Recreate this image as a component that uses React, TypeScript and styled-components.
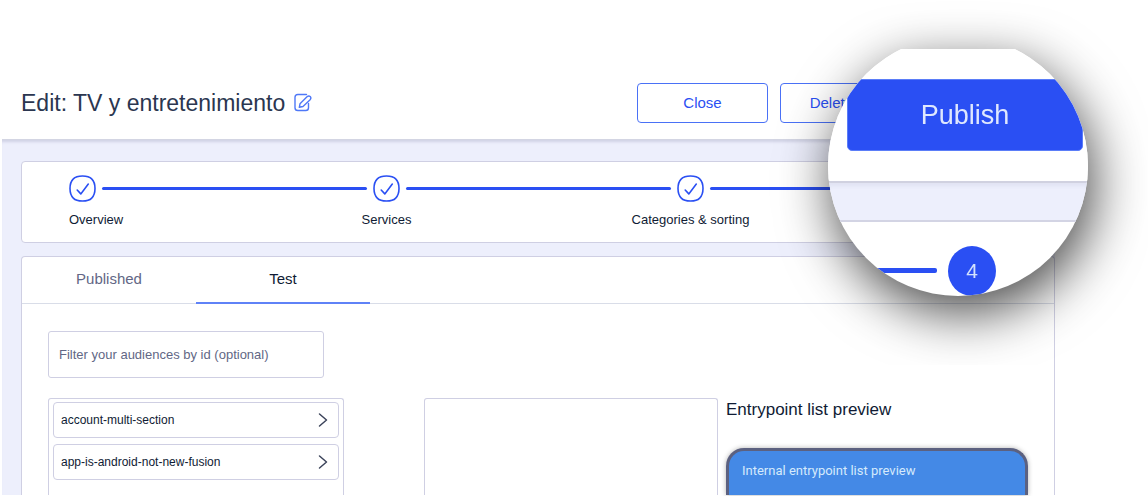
import React from "react";
import styled, { createGlobalStyle } from "styled-components";

const blue = "#2a4ff3";
const ink = "#0f1b34";
const muted = "#626785";
const line = "#cfcfe3";
const lavender = "#edeffc";

const GlobalStyle = createGlobalStyle`
  * { box-sizing: border-box; }
  body {
    margin: 0;
    background: #fff;
    color: ${ink};
    font-family: "Liberation Sans", Arial, sans-serif;
  }
  button, input { font-family: inherit; }
`;

const Page = styled.div`
  position: relative;
  height: 100vh;
  padding: 66px 93px 1px 2px;
  display: flex;
  flex-direction: column;
  overflow: hidden;
`;

const Header = styled.header`
  display: flex;
  align-items: center;
  height: 74px;
  flex: none;
  padding: 0 144px 0 19px;
  background: #fff;
  border-bottom: 1px solid #d3d5e3;
`;

const Title = styled.h1`
  margin: 0;
  font-size: 23px;
  line-height: 28px;
  font-weight: 400;
  color: #2b3650;
  white-space: nowrap;
`;

const IconButton = styled.button`
  display: flex;
  margin-left: 9px;
  padding: 0;
  border: 0;
  background: none;
  color: #4f78f7;
`;

const Actions = styled.div`
  display: flex;
  gap: 12px;
  margin-left: auto;
`;

const OutlineButton = styled.button`
  width: 131px;
  height: 40px;
  padding: 0;
  border: 1px solid #4a71f6;
  border-radius: 4px;
  background: #fff;
  color: ${blue};
  font-size: 15px;
  white-space: nowrap;
`;

const Body = styled.main`
  flex: 1;
  min-height: 0;
  display: flex;
  flex-direction: column;
  gap: 13px;
  padding: 21px 0 0 19px;
  background: ${lavender};
  box-shadow: inset 0 4px 3px -2px rgba(60, 64, 110, 0.16);
`;

const Steps = styled.ol`
  display: flex;
  flex: none;
  margin: 0;
  padding: 13px 73px 13px 47px;
  list-style: none;
  background: #fff;
  border: 1px solid ${line};
  border-radius: 4px;
`;

const Step = styled.li<{ $align: "start" | "center" }>`
  flex: 1;
  display: grid;
  grid-template-columns: 27px 1fr;
  align-items: center;
  row-gap: 9px;

  & > span {
    justify-self: ${(p) => p.$align};
    white-space: nowrap;
    font-size: 13px;
    line-height: 18px;
  }
`;

const StepLine = styled.div`
  height: 3px;
  margin: 0 6px;
  border-radius: 2px;
  background: ${blue};
`;

const Panel = styled.section`
  flex: 1;
  min-height: 0;
  display: flex;
  flex-direction: column;
  background: #fff;
  border: 1px solid ${line};
  border-bottom: 0;
  border-radius: 4px 4px 0 0;
`;

const Tabs = styled.div`
  display: flex;
  flex: none;
  height: 47px;
  border-bottom: 1px solid #d9dde8;
`;

const Tab = styled.button<{ $active?: boolean }>`
  width: 174px;
  height: 47px;
  padding: 0 0 2px;
  border: 0;
  border-bottom: 2px solid ${(p) => (p.$active ? "#5f82f7" : "transparent")};
  background: none;
  color: ${(p) => (p.$active ? ink : muted)};
  font-size: 15px;
`;

const Filter = styled.input`
  flex: none;
  width: 276px;
  height: 47px;
  margin: 27px 0 20px 26px;
  padding: 0 10px;
  border: 1px solid ${line};
  border-radius: 3px;
  color: ${ink};
  font-size: 13px;

  &::placeholder { color: ${muted}; opacity: 1; }
`;

const Columns = styled.div`
  flex: 1;
  min-height: 0;
  display: flex;
  gap: 8px;
  padding: 0 26px;
`;

const AudienceList = styled.ul`
  width: 296px;
  margin: 0 72px 0 0;
  padding: 3px 4px;
  display: flex;
  flex-direction: column;
  gap: 6px;
  list-style: none;
  border: 1px solid ${line};
  border-bottom: 0;
  border-radius: 3px 3px 0 0;
`;

const AudienceButton = styled.button`
  display: flex;
  align-items: center;
  justify-content: space-between;
  width: 100%;
  height: 36px;
  padding: 0 9px 0 7px;
  border: 1px solid ${line};
  border-radius: 4px;
  background: #fff;
  color: ${ink};
  font-size: 12px;
`;

const EmptyBox = styled.div`
  width: 294px;
  border: 1px solid ${line};
  border-bottom: 0;
  border-radius: 3px 3px 0 0;
`;

const PreviewColumn = styled.div`
  flex: 1;
  min-width: 0;
  display: flex;
  flex-direction: column;

  h2 {
    margin: 0 0 26px;
    font-size: 17px;
    line-height: 24px;
    font-weight: 400;
    white-space: nowrap;
  }
`;

const Device = styled.div`
  flex: 1;
  min-height: 0;
  border: 3px solid #5c6180;
  border-bottom: 0;
  border-radius: 18px 18px 0 0;
  background: #4489e6;
  box-shadow: 0 0 5px rgba(0, 0, 0, 0.3);
  padding: 10px 13px;
  color: #d5eafc;
  font: 13px/20px Roboto, sans-serif;
  white-space: nowrap;
`;

const LensArea = styled.div`
  position: absolute;
  top: 0;
  right: 0;
  z-index: 2;
  overflow: hidden;
  padding: 49px 60px 69px 90px;
  pointer-events: none;
`;

const LensShadow = styled.div`
  filter: drop-shadow(5px 17px 27px rgba(0, 0, 0, 0.72));
`;

const Lens = styled.div`
  width: 260px;
  height: 247px;
  display: flex;
  flex-direction: column;
  background: #fff;
  clip-path: circle(130px at 130px 117px);
`;

const LensHeader = styled.div`
  height: 134px;
  padding: 30px 5px 0 19px;
  background: #fff;
  border-bottom: 2px solid #d0d1e0;
`;

const PublishButton = styled.button`
  width: 100%;
  height: 72px;
  padding: 0;
  border: 1px solid #5b7df8;
  border-radius: 5px;
  background: ${blue};
  color: #dfe8fe;
  font-size: 27px;
`;

const LensGap = styled.div`
  height: 39px;
  background: ${lavender};
  border-bottom: 2px solid #d3d4e4;
  box-shadow: inset 0 3px 4px rgba(60, 64, 110, 0.07);
`;

const LensStep = styled.div`
  display: flex;
  align-items: center;
  gap: 11px;
  height: 74px;
  padding-top: 23px;
`;

const LensLine = styled.div`
  width: 109px;
  height: 5px;
  border-radius: 2px;
  background: ${blue};
`;

const LensNumber = styled.span`
  display: flex;
  align-items: center;
  justify-content: center;
  width: 48px;
  height: 50px;
  border-radius: 50%;
  background: ${blue};
  color: #d3e2fd;
  font-size: 21px;
`;

const EditIcon = () => (
  <svg width="18" height="19" viewBox="0 0 18 19" fill="none" stroke="currentColor" strokeWidth="1.4" strokeLinecap="round" strokeLinejoin="round">
    <path d="M12.500 1.500H3.800Q1 1.500 1 4.300V14.700Q1 17.500 3.800 17.500H11.700Q14.500 17.500 14.500 14.700V10.500" />
    <path d="M5.300 14.300L6 10.800L13 3.800Q14.700 2.200 16.200 3.500Q17.600 5 16.100 6.700L9 13.500Z" />
  </svg>
);

const CheckIcon = () => (
  <svg width="27" height="27" viewBox="0 0 27 27" fill="none" stroke={blue} strokeWidth="1.6" strokeLinecap="round" strokeLinejoin="round">
    <path d="M13.500 1C18 1 20.700 1.800 22.700 3.900C25 6.200 26 9.200 26 13.500C26 17.800 25 20.800 22.700 23.100C20.700 25.200 18 26 13.500 26C9 26 6.300 25.200 4.300 23.100C2 20.800 1 17.800 1 13.500C1 9.200 2 6.200 4.300 3.900C6.300 1.800 9 1 13.500 1Z" />
    <path d="M8.200 15L11.800 18.900L19.300 9.100" />
  </svg>
);

const Chevron = () => (
  <svg width="12" height="16" viewBox="0 0 12 16" fill="none" stroke="#3b435a" strokeWidth="1.5" strokeLinecap="round" strokeLinejoin="round">
    <path d="M2.500 2L9.500 8L2.500 14" />
  </svg>
);

const steps = ["Overview", "Services", "Categories & sorting"];
const audiences = ["account-multi-section", "app-is-android-not-new-fusion"];

export default function App() {
  return (
    <Page>
      <GlobalStyle />
      <Header>
        <Title>Edit: TV y entretenimiento</Title>
        <IconButton aria-label="Edit name"><EditIcon /></IconButton>
        <Actions>
          <OutlineButton>Close</OutlineButton>
          <OutlineButton>Delete test</OutlineButton>
        </Actions>
      </Header>
      <Body>
        <Steps>
          {steps.map((name, i) => (
            <Step key={name} $align={i === 0 ? "start" : "center"}>
              <CheckIcon />
              <StepLine />
              <span>{name}</span>
            </Step>
          ))}
        </Steps>
        <Panel>
          <Tabs role="tablist">
            <Tab role="tab" aria-selected={false}>Published</Tab>
            <Tab role="tab" aria-selected $active>Test</Tab>
          </Tabs>
          <Filter aria-label="Filter your audiences by id" placeholder="Filter your audiences by id (optional)" />
          <Columns>
            <AudienceList>
              {audiences.map((id) => (
                <li key={id}>
                  <AudienceButton>{id}<Chevron /></AudienceButton>
                </li>
              ))}
            </AudienceList>
            <EmptyBox />
            <PreviewColumn>
              <h2>Entrypoint list preview</h2>
              <Device>Internal entrypoint list preview</Device>
            </PreviewColumn>
          </Columns>
        </Panel>
      </Body>
      <LensArea>
        <LensShadow>
          <Lens>
            <LensHeader>
              <PublishButton>Publish</PublishButton>
            </LensHeader>
            <LensGap />
            <LensStep>
              <LensLine />
              <LensNumber>4</LensNumber>
            </LensStep>
          </Lens>
        </LensShadow>
      </LensArea>
    </Page>
  );
}
